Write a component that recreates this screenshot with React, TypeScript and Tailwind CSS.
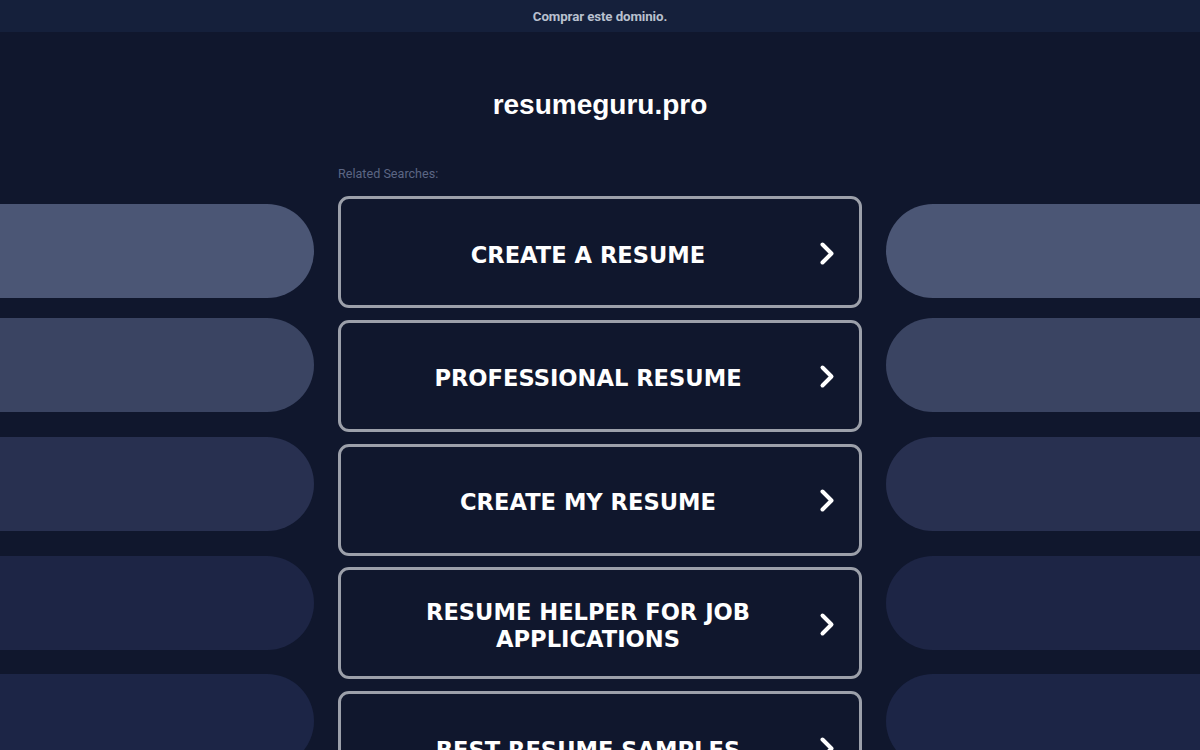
import React from 'react';

const searches = [
  'Create a Resume',
  'Professional Resume',
  'Create My Resume',
  'Resume Helper for Job Applications',
  'Best Resume Samples',
];

// background pills, left + right side
const pills = [
  { color: 'bg-[#4b5675]', gap: 'mt-0' },
  { color: 'bg-[#3a4462]', gap: 'mt-[20px]' },
  { color: 'bg-[#283050]', gap: 'mt-[25px]' },
  { color: 'bg-[#1d2545]', gap: 'mt-[25px]' },
  { color: 'bg-[#1c2546]', gap: 'mt-[24px]' },
];

const Chevron = () => (
  <svg width="16" height="25" viewBox="0 0 16 25" fill="none" className="shrink-0">
    <path d="M3.5 3.5 L12.5 12.5 L3.5 21.5" stroke="#ffffff" strokeWidth="4" strokeLinecap="round" strokeLinejoin="round" />
  </svg>
);

const PillColumn = ({ side }: { side: 'left' | 'right' }) => (
  <div className="flex flex-col w-[314px]">
    {pills.map((p, i) => (
      <div
        key={i}
        className={`${p.color} ${p.gap} h-[94px] shrink-0 ${side === 'left' ? 'rounded-r-full' : 'rounded-l-full'}`}
      />
    ))}
  </div>
);

export default function App() {
  return (
    <div className="relative min-h-screen h-[750px] overflow-hidden bg-[#10172d]" style={{ fontFamily: 'Roboto, "Liberation Sans", sans-serif' }}>
      {/* decorative background */}
      <div className="absolute inset-x-0 top-[204px] flex justify-between pointer-events-none">
        <PillColumn side="left" />
        <PillColumn side="right" />
      </div>

      <div className="relative">
        <div className="h-8 bg-[#15203b] flex items-center justify-center">
          <a className="text-[13.3px] font-bold text-[#b9c0cf] tracking-[-0.1px] mt-[1px]">Comprar este dominio.</a>
        </div>

        <div className="flex justify-center pt-[54px]">
          <h1 className="text-[28px] leading-[38px] font-bold text-white" style={{ fontFamily: '"Liberation Sans", Arial, sans-serif' }}>
            resumeguru.pro
          </h1>
        </div>

        <div className="w-[524px] mx-auto pt-[43px]">
          <p className="text-[12.6px] leading-[14px] text-[#5c6684]">Related Searches:</p>
          <div className="mt-[15px] flex flex-col gap-[11.75px]">
            {searches.map((s) => (
              <a
                key={s}
                className="h-[112px] shrink-0 flex items-center border-[3px] border-[#9ca0aa] rounded-[11px] bg-[#10172d] pl-[29px] pr-[24px]"
              >
                <span
                  className="flex-1 mt-[6px] text-center uppercase font-bold text-white text-[22.6px] leading-[27px] px-2"
                  style={{ fontFamily: 'Verdana, "DejaVu Sans", sans-serif' }}
                >
                  {s}
                </span>
                <span className="ml-[13px] mt-[2px]">
                  <Chevron />
                </span>
              </a>
            ))}
          </div>
        </div>
      </div>
    </div>
  );
}
